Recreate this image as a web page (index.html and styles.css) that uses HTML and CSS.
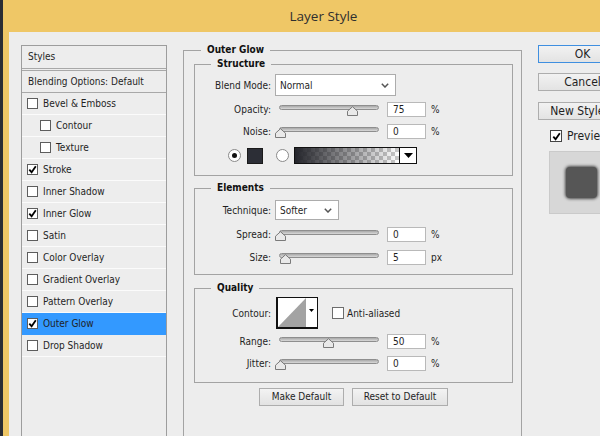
FILE: index.html
```html
<!DOCTYPE html>
<html>
<head>
<meta charset="utf-8">
<title>Layer Style</title>
<link rel="stylesheet" href="styles.css">
</head>
<body>
<div class="win">
  <div class="titlebar">Layer Style</div>
  <div class="client">
    <div class="stylelist">
      <div class="hdr">Styles</div>
      <div class="hdr blend">Blending Options: Default</div>
      <div class="item"><span class="cb"></span>Bevel &amp; Emboss</div>
      <div class="item sub"><span class="cb"></span>Contour</div>
      <div class="item sub"><span class="cb"></span>Texture</div>
      <div class="item"><span class="cb"><svg viewBox="0 0 9 9" class="tick"><path d="M1.3 4.6 L3.6 7.2 L7.8 1.3"/></svg></span>Stroke</div>
      <div class="item"><span class="cb"></span>Inner Shadow</div>
      <div class="item"><span class="cb"><svg viewBox="0 0 9 9" class="tick"><path d="M1.3 4.6 L3.6 7.2 L7.8 1.3"/></svg></span>Inner Glow</div>
      <div class="item"><span class="cb"></span>Satin</div>
      <div class="item"><span class="cb"></span>Color Overlay</div>
      <div class="item"><span class="cb"></span>Gradient Overlay</div>
      <div class="item"><span class="cb"></span>Pattern Overlay</div>
      <div class="item sel"><span class="cb"><svg viewBox="0 0 9 9" class="tick"><path d="M1.3 4.6 L3.6 7.2 L7.8 1.3"/></svg></span>Outer Glow</div>
      <div class="item"><span class="cb"></span>Drop Shadow</div>
      <div class="filler"></div>
    </div>

    <fieldset class="outer">
      <legend>Outer Glow</legend>

      <fieldset class="grp structure">
        <legend>Structure</legend>
        <div class="row tall">
          <span class="lbl">Blend Mode:</span>
          <div class="select blendsel"><span>Normal</span><svg class="chev" viewBox="0 0 8 5"><path d="M0.8 0.8 L4 4 L7.2 0.8"/></svg></div>
        </div>
        <div class="row r2">
          <span class="lbl">Opacity:</span>
          <div class="slider"><div class="track"></div><svg class="thumb" style="left:68px" viewBox="0 0 11 10"><path d="M0.5 9.5 V5.2 L5.5 0.7 L10.5 5.2 V9.5 Z"/></svg></div>
          <div class="num">75</div><span class="unit">%</span>
        </div>
        <div class="row r2">
          <span class="lbl">Noise:</span>
          <div class="slider"><div class="track"></div><svg class="thumb" style="left:-4px" viewBox="0 0 11 10"><path d="M0.5 9.5 V5.2 L5.5 0.7 L10.5 5.2 V9.5 Z"/></svg></div>
          <div class="num">0</div><span class="unit">%</span>
        </div>
        <div class="row r3">
          <span class="radio on"></span>
          <span class="swatch"></span>
          <span class="radio r-grad"></span>
          <div class="gradbox"><div class="gradfill"></div><div class="graddrop"><svg viewBox="0 0 9 5" class="tri"><path d="M0 0 H9 L4.5 5 Z"/></svg></div></div>
        </div>
      </fieldset>

      <fieldset class="grp elements">
        <legend>Elements</legend>
        <div class="row tall2">
          <span class="lbl">Technique:</span>
          <div class="select techsel"><span>Softer</span><svg class="chev" viewBox="0 0 8 5"><path d="M0.8 0.8 L4 4 L7.2 0.8"/></svg></div>
        </div>
        <div class="row r4">
          <span class="lbl">Spread:</span>
          <div class="slider"><div class="track"></div><svg class="thumb" style="left:-4px" viewBox="0 0 11 10"><path d="M0.5 9.5 V5.2 L5.5 0.7 L10.5 5.2 V9.5 Z"/></svg></div>
          <div class="num">0</div><span class="unit">%</span>
        </div>
        <div class="row r4">
          <span class="lbl">Size:</span>
          <div class="slider"><div class="track"></div><svg class="thumb" style="left:1px" viewBox="0 0 11 10"><path d="M0.5 9.5 V5.2 L5.5 0.7 L10.5 5.2 V9.5 Z"/></svg></div>
          <div class="num">5</div><span class="unit">px</span>
        </div>
      </fieldset>

      <fieldset class="grp quality">
        <legend>Quality</legend>
        <div class="row contour-row">
          <span class="lbl">Contour:</span>
          <div class="contour">
            <svg class="curve" viewBox="0 0 29 30" preserveAspectRatio="none"><path d="M0 30 L29 0 V30 Z"/></svg>
            <div class="cdrop"><svg viewBox="0 0 5 3" class="tri small"><path d="M0 0 H5 L2.5 3 Z"/></svg></div>
          </div>
          <span class="cbx"></span><span class="cbx-text">Anti-aliased</span>
        </div>
        <div class="row r5">
          <span class="lbl">Range:</span>
          <div class="slider"><div class="track"></div><svg class="thumb" style="left:44px" viewBox="0 0 11 10"><path d="M0.5 9.5 V5.2 L5.5 0.7 L10.5 5.2 V9.5 Z"/></svg></div>
          <div class="num">50</div><span class="unit">%</span>
        </div>
        <div class="row r6">
          <span class="lbl">Jitter:</span>
          <div class="slider"><div class="track"></div><svg class="thumb" style="left:-4px" viewBox="0 0 11 10"><path d="M0.5 9.5 V5.2 L5.5 0.7 L10.5 5.2 V9.5 Z"/></svg></div>
          <div class="num">0</div><span class="unit">%</span>
        </div>
      </fieldset>

      <div class="btnrow">
        <div class="btn b-make">Make Default</div>
        <div class="btn b-reset">Reset to Default</div>
      </div>
    </fieldset>

    <div class="side">
      <div class="pbtn ok">OK</div>
      <div class="pbtn">Cancel</div>
      <div class="pbtn newstyle">New Style...</div>
      <div class="prevrow"><span class="cbx big"><svg viewBox="0 0 9 9" class="tick"><path d="M1.3 4.6 L3.6 7.2 L7.8 1.3"/></svg></span><span class="prevtext">Preview</span></div>
      <div class="prevbox"><div class="prevsq"></div></div>
    </div>
  </div>
</div>
</body>
</html>
```

FILE: styles.css
```css
html, body {
  margin: 0;
  padding: 0;
  overflow: hidden;
}
body {
  width: 600px;
  height: 436px;
  background: #ededed;
  font-family: "DejaVu Sans Condensed", "DejaVu Sans", sans-serif;
  font-stretch: condensed;
  font-size: 10px;
  color: #1f1f1f;
}
.win {
  width: 647px;
  height: 436px;
  box-sizing: border-box;
  border-left: 3px solid #2b2d33;
  background: #efc766;
  display: flex;
  flex-direction: column;
}
.titlebar {
  height: 32px;
  line-height: 33px;
  text-align: center;
  padding-right: 3px;
  font-family: "Open Sans", "Noto Sans", sans-serif;
  font-stretch: normal;
  font-size: 13.5px;
  color: #2f2f2f;
}
.client {
  flex: 1;
  margin-left: 6px;
  background: #ededed;
  display: flex;
  align-items: flex-start;
  padding: 10px 0 0 12px;
  min-height: 0;
}

/* style list */
.stylelist {
  width: 146px;
  box-sizing: border-box;
  margin-top: 3px;
  border: 1px solid #9d9d9d;
  flex: none;
}
.hdr {
  height: 22px;
  line-height: 22px;
  padding-left: 6px;
  border-bottom: 1px solid #a8a8a8;
}
.hdr.blend {
  border-top: 1px solid #a8a8a8;
  margin-top: 1px;
  height: 21px;
}
.item {
  height: 21px;
  display: flex;
  align-items: center;
  padding-left: 5px;
  border-bottom: 1px solid #fbfbfb;
}
.item.sub { padding-left: 18px; }
.item.sel { background: #3399ff; border-bottom-color: #3399ff; }
.filler { height: 120px; }
.cb {
  width: 11px;
  height: 11px;
  box-sizing: border-box;
  border: 1px solid #5d5d5d;
  background: #fff;
  margin-right: 5px;
  display: flex;
  align-items: center;
  justify-content: center;
  flex: none;
}
.tick {
  width: 9px;
  height: 9px;
  fill: none;
  stroke: #000;
  stroke-width: 1.8;
}

/* fieldsets */
fieldset {
  margin: 0;
  min-width: 0;
  border: 1px solid #a3a3a3;
  box-sizing: border-box;
}
legend {
  font-weight: bold;
  line-height: 12px;
  padding: 0 6px;
  color: #111;
}
.outer {
  width: 339px;
  margin: 2px 0 0 16px;
  padding: 2px 8px 80px 10px;
  flex: none;
}
.outer > legend { margin-left: 7px; }
.grp {
  width: 319px;
  padding: 4px 0 11px 0;
}
.grp > legend { margin-left: 16px; }
.elements { margin-top: 6px; padding: 6px 0 8px 0; }
.quality { margin-top: 7px; padding: 3px 0 10px 0; }

.row {
  display: flex;
  align-items: center;
  height: 17px;
}
.row.tall { height: 22px; }
.row.tall2 { height: 20px; }
.r2 { margin-top: 5px; }
.r3 { margin-top: 7px; }
.r4 { margin-top: 6px; }
.elements .r4 + .r4 { margin-top: 6px; }
.r5 { margin-top: 4px; }
.r6 { margin-top: 5px; }
.lbl {
  width: 76px;
  text-align: right;
  flex: none;
}
.select {
  margin-left: 4px;
  height: 100%;
  box-sizing: border-box;
  background: #fff;
  border: 1px solid #acacac;
  display: flex;
  align-items: center;
  justify-content: space-between;
  padding: 0 6px 0 4px;
  flex: none;
}
.blendsel { width: 121px; }
.techsel { width: 64px; }
.chev {
  width: 8px;
  height: 5px;
  fill: none;
  stroke: #555;
  stroke-width: 1.5;
}
.slider {
  position: relative;
  width: 100px;
  height: 17px;
  margin-left: 8px;
  flex: none;
}
.track {
  margin-top: 4px;
  height: 3px;
  border: 1px solid #8e8e8e;
  border-radius: 3px;
  background: linear-gradient(#a8a8a8, #d9d9d9);
}
.thumb {
  position: absolute;
  top: 5px;
  width: 11px;
  height: 10px;
  fill: #e9e9e9;
  stroke: #7a7a7a;
  stroke-width: 1;
}
.num {
  margin-left: 8px;
  width: 39px;
  height: 15px;
  box-sizing: border-box;
  border: 1px solid #b9b9b9;
  background: #fff;
  padding-left: 5px;
  line-height: 13px;
  flex: none;
}
.unit { margin-left: 5px; }

.radio {
  width: 13px;
  height: 13px;
  box-sizing: border-box;
  border: 1px solid #8a8a8a;
  border-radius: 50%;
  background: #fff;
  margin-left: 33px;
  flex: none;
  display: flex;
  align-items: center;
  justify-content: center;
}
.radio.on::after {
  content: "";
  width: 5px;
  height: 5px;
  border-radius: 50%;
  background: #111;
}
.radio.r-grad { margin-left: 13px; }
.swatch {
  width: 16px;
  height: 16px;
  box-sizing: border-box;
  margin-left: 6px;
  background: #2c2e36;
  border: 1px solid #1a1a1a;
  flex: none;
}
.gradbox {
  margin-left: 5px;
  width: 123px;
  height: 17px;
  box-sizing: border-box;
  border: 1px solid #111;
  display: flex;
  flex: none;
}
.gradfill {
  flex: 1;
  background:
    linear-gradient(to right, #24252b 0%, rgba(40,40,45,0.55) 45%, rgba(40,40,45,0) 100%),
    repeating-conic-gradient(#c9c9c9 0 25%, #ffffff 0 50%) 0 0 / 8px 8px;
}
.graddrop {
  width: 16px;
  border-left: 1px solid #111;
  background: #fff;
  display: flex;
  align-items: center;
  justify-content: center;
}
.tri { width: 9px; height: 5px; fill: #000; }
.tri.small { width: 5px; height: 3px; }

.contour-row { height: 32px; }
.contour {
  margin-left: 5px;
  width: 42px;
  height: 32px;
  box-sizing: border-box;
  border: 1px solid #111;
  border-left-width: 2px;
  border-bottom-width: 2px;
  background: #fff;
  display: flex;
  flex: none;
}
.curve {
  width: 28px;
  height: 29px;
  fill: #a3a3a3;
}
.cdrop {
  flex: 1;
  display: flex;
  align-items: center;
  justify-content: center;
  padding-bottom: 4px;
}
.cbx {
  width: 12px;
  height: 12px;
  box-sizing: border-box;
  border: 1px solid #6d6d6d;
  background: #fff;
  margin-left: 14px;
  flex: none;
  display: flex;
  align-items: center;
  justify-content: center;
}
.cbx-text { margin-left: 3px; }

.btnrow {
  display: flex;
  justify-content: center;
  gap: 8px;
  margin-top: 5px;
}
.btn {
  height: 18px;
  box-sizing: border-box;
  border: 1px solid #adadad;
  background: linear-gradient(#f3f3f3, #e2e2e2);
  text-align: center;
  line-height: 16px;
}
.b-make { width: 85px; }
.b-reset { width: 96px; }

/* side */
.side {
  width: 89px;
  margin: 3px 0 0 16px;
  flex: none;
  display: flex;
  flex-direction: column;
  font-size: 12px;
}
.pbtn {
  height: 18px;
  box-sizing: border-box;
  border: 1px solid #adadad;
  background: linear-gradient(#f2f2f2, #e3e3e3);
  text-align: center;
  line-height: 16px;
  margin-bottom: 10px;
}
.pbtn.ok { border-color: #3f8fe0; }
.pbtn.newstyle { margin-top: 1px; }
.prevrow {
  display: flex;
  align-items: center;
  height: 12px;
  margin-left: 12px;
}
.cbx.big { margin-left: 0; width: 12px; height: 12px; border-color: #444; }
.prevtext { margin-left: 5px; }
.prevbox {
  margin: 9px 0 0 11px;
  width: 64px;
  height: 63px;
  box-sizing: border-box;
  background: #d7d7d7;
  border: 1px solid #cacaca;
  display: flex;
  align-items: center;
  justify-content: center;
}
.prevsq {
  width: 31px;
  height: 31px;
  border-radius: 4px;
  background: #565656;
  box-shadow: 0 0 3px 1px rgba(30,30,30,0.75);
}
```
